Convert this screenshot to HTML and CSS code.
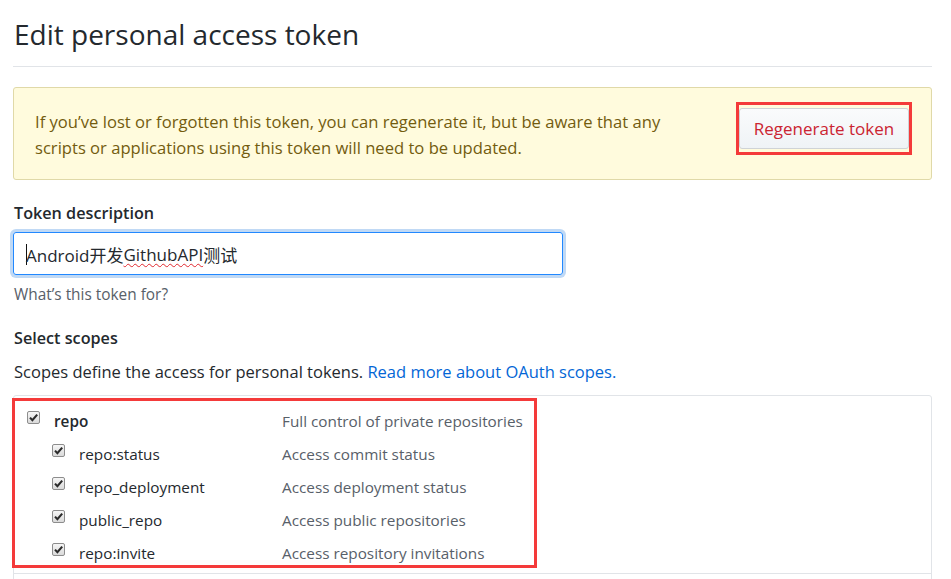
FILE: index.html
```html
<!DOCTYPE html>
<html lang="en">
<head>
<meta charset="utf-8">
<title>Edit personal access token</title>
<link rel="stylesheet" href="styles.css">
</head>
<body>
<div class="page">
  <h1 class="subhead">Edit personal access token</h1>

  <div class="flash">
    <p class="flash-text">If you’ve lost or forgotten this token, you can regenerate it, but be aware that any<br>scripts or applications using this token will need to be updated.</p>
    <span class="mark mark-btn"><button class="btn btn-danger" type="button">Regenerate token</button></span>
  </div>

  <div class="form-group">
    <div class="label">Token description</div>
    <div class="input"><span class="caret"></span>Android开发<span class="spell">GithubAPI</span>测试</div>
    <p class="hint">What’s this token for?</p>
  </div>

  <div class="label scopes-title">Select scopes</div>
  <p class="scopes-desc">Scopes define the access for personal tokens. <a class="link" href="#">Read more about OAuth scopes.</a></p>

  <div class="scopes">
    <div class="group mark">
      <div class="row parent">
        <span class="cell"><span class="cb"><svg viewBox="0 0 13 13" width="13" height="13"><path d="M3 6.6 L5.4 9.2 L10.2 3.6" fill="none" stroke="#2b2b2b" stroke-width="2.1"/></svg></span><span class="name">repo</span></span>
        <span class="note">Full control of private repositories</span>
      </div>
      <div class="row child">
        <span class="cell"><span class="cb"><svg viewBox="0 0 13 13" width="13" height="13"><path d="M3 6.6 L5.4 9.2 L10.2 3.6" fill="none" stroke="#2b2b2b" stroke-width="2.1"/></svg></span><span class="name">repo:status</span></span>
        <span class="note">Access commit status</span>
      </div>
      <div class="row child">
        <span class="cell"><span class="cb"><svg viewBox="0 0 13 13" width="13" height="13"><path d="M3 6.6 L5.4 9.2 L10.2 3.6" fill="none" stroke="#2b2b2b" stroke-width="2.1"/></svg></span><span class="name">repo_deployment</span></span>
        <span class="note">Access deployment status</span>
      </div>
      <div class="row child">
        <span class="cell"><span class="cb"><svg viewBox="0 0 13 13" width="13" height="13"><path d="M3 6.6 L5.4 9.2 L10.2 3.6" fill="none" stroke="#2b2b2b" stroke-width="2.1"/></svg></span><span class="name">public_repo</span></span>
        <span class="note">Access public repositories</span>
      </div>
      <div class="row child">
        <span class="cell"><span class="cb"><svg viewBox="0 0 13 13" width="13" height="13"><path d="M3 6.6 L5.4 9.2 L10.2 3.6" fill="none" stroke="#2b2b2b" stroke-width="2.1"/></svg></span><span class="name">repo:invite</span></span>
        <span class="note">Access repository invitations</span>
      </div>
    </div>
    <div class="group next"></div>
  </div>
</div>
</body>
</html>
```

FILE: styles.css
```css
* { box-sizing: border-box; }

body {
  margin: 0;
  background: #fff;
  color: #24292e;
  font-family: "Open Sans", "Noto Sans CJK SC", sans-serif;
}

.page {
  padding: 0 19px 0 13px;
}

.subhead {
  margin: 14px 0 0;
  padding: 0 0 12px 1px;
  font-size: 28px;
  font-weight: 400;
  line-height: 40px;
  border-bottom: 1px solid #e1e4e8;
}

.flash {
  margin-top: 20px;
  display: flex;
  justify-content: space-between;
  align-items: flex-start;
  padding: 14px 19px 18px 21px;
  background: #fffbdd;
  border: 1px solid #e0d9a8;
  border-radius: 3px;
}

.flash-text {
  margin: 7px 0 0;
  font-size: 16.6px;
  line-height: 26px;
  color: #735c0f;
}

.mark {
  border: 3px solid #f43a3a;
}

.mark-btn {
  display: block;
  padding: 3px 0;
}

.btn {
  display: block;
  width: 170px;
  height: 41px;
  padding: 0;
  font-family: inherit;
  font-size: 17px;
  background: linear-gradient(#fafbfc, #eff3f6);
  border: 1px solid #cfd3d7;
  border-radius: 3px;
}

.btn-danger {
  color: #cb2431;
}

.form-group {
  margin-top: 21px;
}

.label {
  font-size: 16.2px;
  font-weight: 600;
  line-height: 24px;
  padding-left: 1px;
}

.input {
  margin-top: 7px;
  width: 550px;
  height: 43px;
  display: flex;
  align-items: center;
  padding-left: 12px;
  padding-top: 1px;
  font-size: 17px;
  color: #24292e;
  border: 1px solid #2188ff;
  border-radius: 3px;
  box-shadow: 0 0 0 3px rgba(3, 102, 214, 0.25);
}

.caret {
  width: 1px;
  height: 21px;
  background: #111;
  margin-right: -1px;
}

.spell {
  text-decoration: underline wavy #e0282e;
  text-decoration-thickness: 1px;
  text-underline-offset: 2px;
}

.hint {
  margin: 10px 0 0;
  padding-left: 1px;
  font-size: 15.4px;
  line-height: 20px;
  color: #586069;
}

.scopes-title {
  margin-top: 21px;
}

.scopes-desc {
  margin: 10px 0 0;
  padding-left: 1px;
  font-size: 16.5px;
  line-height: 24px;
}

.link {
  color: #0366d6;
  text-decoration: none;
}

.scopes {
  margin-top: 11px;
  border: 1px solid #e1e4e8;
  border-radius: 3px;
  height: 200px;
}

.group.mark {
  width: 525px;
  height: 170px;
  margin: 2px 0 5px -2px;
  padding-top: 4px;
}

.group.next {
  border-top: 1px solid #e1e4e8;
  height: 20px;
}

.row {
  display: flex;
  align-items: flex-start;
  height: 33px;
  font-size: 15.3px;
  line-height: 33px;
}

.cell {
  display: flex;
  align-items: flex-start;
  width: 267px;
  padding-left: 12px;
}

.row.child .cell {
  padding-left: 37px;
}

.cb {
  flex: none;
  width: 13px;
  height: 13px;
  margin-top: 6px;
  margin-right: 14px;
  border: 1px solid #8d8d8d;
  border-radius: 2px;
  background: linear-gradient(#f6f6f6, #dadada);
  display: flex;
}

.cb svg {
  margin: -1px;
}

.name {
  color: #24292e;
}

.parent .name {
  font-weight: 600;
}

.note {
  color: #586069;
}
```
